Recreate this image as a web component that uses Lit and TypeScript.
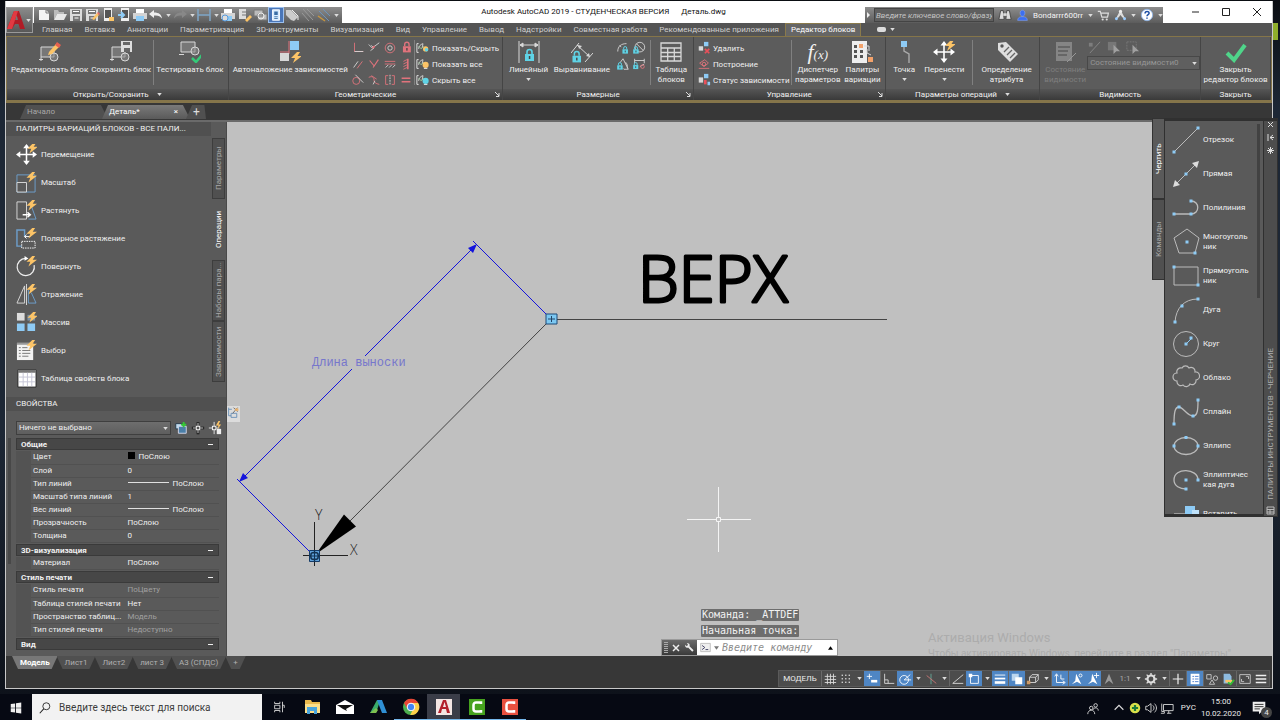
import { LitElement, html, svg, css, TemplateResult } from "lit";
import { customElement, property } from "lit/decorators.js";
import { classMap } from "lit/directives/class-map.js";

const G = "#d8d8d8";
const B = "#8ecbf5";
const R = "#e0737c";
const Y = "#fcc467";
const C = "#5fd3e6";

const bolt = (x: number, y: number) => svg`<path transform="translate(${x} ${y})" fill=${Y} d="M6 0L0 6h4l-2 5 9-7H6.500L9 0z"/>`;
const dots = (pts: number[][]) => pts.map(([x, y]) => svg`<rect x=${x - 1.5} y=${y - 1.5} width="3" height="3" fill=${B}/>`);
const lock = (x: number, y: number, s: number, color = C) => svg`<g transform="translate(${x} ${y}) scale(${s})"><path d="M2.500 5V3a2.500 2.500 0 0 1 5 0v2" fill="none" stroke=${color} stroke-width="1.600"/><rect y="5" x="0.500" width="9" height="7" fill=${color}/><rect x="4.300" y="7" width="1.500" height="3" fill="#444"/></g>`;
const move4 = svg`<path d="M11 3v16M3 11h16" stroke="#fff" stroke-width="1.600" fill="none"/><path d="M11 0l3.500 4.500h-7zM11 22l3.500-4.500h-7zM0 11l4.500-3.500v7zM22 11l-4.500-3.500v7z" fill="#fff"/>`;
const block = svg`<path d="M2 6h13v10H2z" fill="#777" stroke=${G}/><circle cx="15" cy="16" r="4" fill="#888" fill-opacity=".6" stroke=${G}/><path d="M0 18.500h4M2 16v4" stroke=${G}/>`;
const floppy = svg`<path d="M2 2h12v12H2z" fill="#dcdcdc"/><path d="M4 3h8v4H4zM5 9h7v5H5z" fill="#777"/><path d="M5 4.500h6M6.500 11h4" stroke="#fff"/>`;
const printer = svg`<path d="M4 2h8v4H4z" fill="#fff"/><path d="M1 6h14v6H1z" fill="#d4d4d4"/><path d="M4 9h8v5H4z" fill=${B}/>`;
const sheetEye = svg`<path d="M3 9c0-3 2-5 5-6l-1 5" fill="none" stroke=${G}/><path d="M1 3v10M1 3h2M1 13h2" stroke="#eee" fill="none"/><path d="M3 6l3 3 3-3" stroke="#9c9" fill="none"/>`;
const person = svg`<path d="M8 1.500c2 0 3 1.500 3 3.500s-1 4-3 4-3-2-3-4 1-3.500 3-3.500zM2 14c0-3 2-4 4-4.500h4c2 .5 4 1.500 4 4.500z" fill="#3d6ff0" stroke="#9db9ff" stroke-width=".5"/>`;

/** Icon artwork: [viewBox side, shapes]. */
const ICONS: Record<string, [number, unknown]> = {
  new: [16, svg`<path d="M3 3h7l3 3v7H3z" fill="#f4f4f4"/><path d="M10 3v3h3" fill="none" stroke="#777"/>`],
  open: [16, svg`<path d="M2 3h4l1 2h5v2H5l-3 6z" fill="#bbb"/><path d="M5 7h10l-3 6H2z" fill="#e8e8e8"/>`],
  save: [16, floppy],
  saveas: [16, svg`${floppy}<path d="M8 12l5-6 2 2-5 5z" fill=${Y}/><path d="M13 6l2 2 1-1-2-2z" fill="#e66"/>`],
  webopen: [16, svg`<path d="M4 1h8v13H4z" fill="#eee"/><path d="M5 3h6v8H5z" fill="#555"/><path d="M9 10h5v4H9z" fill=${Y}/>`],
  websave: [16, svg`<path d="M5 1h8v13H5z" fill="#eee"/><path d="M6 3h6v8H6z" fill="#555"/><path d="M2 8h6M5 5l3 3-3 3" stroke=${B} stroke-width="2" fill="none"/>`],
  print: [16, printer],
  undo: [16, svg`<path d="M6 3L1 7l5 4V8.500c4-.5 6 .5 8 3-.5-4-3-6-8-6z" fill="#eee"/>`],
  redo: [16, svg`<path d="M10 3l5 4-5 4V8.500c-4-.5-6 .5-8 3 .5-4 3-6 8-6z" fill="#888"/>`],
  dim: [16, svg`<path d="M2 2v12M14 2v12M2 8h12" stroke="#7fa6c8" stroke-width="1.500" fill="none"/>`],
  plot: [16, svg`${printer}<circle cx="5" cy="11" r="3" fill="#ddd" stroke="#59d"/>`],
  publish: [16, svg`<path d="M3 2h7v10H3z" fill="#ddd"/><path d="M6 5h8M6 8h8" stroke="#777"/><path d="M9 13l5-5 2 2-5 5z" fill=${Y}/>`],
  batch: [16, svg`<path d="M2 3h9v6H2zM6 7h9v6H6z" fill="#bbb" stroke="#777"/><circle cx="9" cy="9" r="3" fill="none" stroke="#eee"/>`],
  sheet: [16, svg`<path d="M4 2h8v12H4z" fill="#d8ecff" stroke="#fff"/><path d="M6 4h4v4H6z" fill="#3b6ea5"/><path d="M6 10h4M6 12h4" stroke="#3b6ea5"/>`],
  tag: [16, svg`<path d="M2 3h5l7 7-4 4-3-1-5-5z" fill="#ccc"/><path d="M8 3l6 6v4" stroke="#eee" fill="none"/>`],
  lines: [16, svg`<path d="M3 2l10 11M2 6l7 8M7 2l7 7" stroke="#999"/>`],
  lines2: [16, svg`<path d="M3 4l10 10M7 2l7 7" stroke="#6d94bb"/><path d="M2 9l7 5" stroke="#c8973f" stroke-width="1.500"/>`],
  bino: [16, svg`<path d="M3 3h3l1 10H1zM10 3h3l2 10H9z" fill="#ddd" stroke="#444"/><path d="M6 6h4v3H6z" fill="#ddd"/>`],
  person: [16, person],
  cart: [16, svg`<path d="M1 3h3l2 7h7l1-5H5" fill="none" stroke="#ddd" stroke-width="1.500"/><circle cx="7" cy="13" r="1.300" fill="#ddd"/><circle cx="12" cy="13" r="1.300" fill="#ddd"/>`],
  a360: [16, svg`<path d="M8 3l-5 9M8 3l5 9M5 10l3-4 3 4" stroke="#ddd" stroke-width="1.600" fill="none"/><circle cx="8" cy="3" r="2" fill="#eee"/><circle cx="3" cy="12" r="1.800" fill="#9cf"/><circle cx="13" cy="12" r="1.800" fill="#9cf"/>`],
  help: [16, svg`<circle cx="8" cy="8" r="6.500" fill="#fff" stroke="#8fb3e6"/><path d="M5.800 6.200c0-3 4.600-3 4.600-.2C10.400 7.500 8 7.600 8 9.500M8 10.800v1.600" stroke="#1d4fa5" stroke-width="1.700" fill="none"/>`],
  editBlock: [22, svg`${block}<path d="M10 11l7-8 3 3-7 7-4 1z" fill=${Y}/><path d="M16 4l2-3 4 3-2 3z" fill="#e6604f"/>`],
  saveBlock: [22, svg`${block}<path d="M11 0h11v11H11z" fill="#ddd"/><path d="M13 1h7v3h-7zM14 7h6v4h-6z" fill="#666"/>`],
  testBlock: [22, svg`<path d="M2 1h14v10H2z" fill="#777" stroke=${G}/><circle cx="16" cy="10" r="4" fill="#888" fill-opacity=".6" stroke=${G}/><path d="M0 13.500h5" stroke=${G}/><path d="M13 17l4 4 6-7" stroke="#35c978" stroke-width="2.500" fill="none"/>`],
  auto: [22, svg`<path d="M11 0h9v9h-9z" fill=${B}/><path d="M10 0v13M1 11h9" stroke=${R}/><path d="M1 12h9v8H1z" fill=${G}/>${bolt(12, 11)}`],
  g0: [16, svg`<path d="M4 2v10h10" fill="none" stroke=${R}/><path d="M4 12h10" stroke=${G}/>`],
  g1: [16, svg`<path d="M2 4l4 4M6 8l8-6M5 5l3 3-4 3" stroke=${G} fill="none"/><path d="M6 8l3-2" stroke=${R} stroke-width="2"/>`],
  g2: [16, svg`<circle cx="8" cy="8" r="5.500" fill="none" stroke=${R}/><circle cx="8" cy="8" r="2.500" fill="none" stroke=${G}/>`],
  g3: [16, lock(4, 1, 1, R)],
  g4: [16, svg`<path d="M3 12l5-7" stroke=${G}/><path d="M7 13l6-8" stroke=${R}/>`],
  g5: [16, svg`<path d="M3 4l5 6M7 12l6-9" stroke=${R} fill="none" stroke-width="1.300"/>`],
  g6: [16, svg`<path d="M2 5h12M2 8h12" stroke=${R}/><path d="M3 12l3-3M7 12l3-3M11 12l3-3" stroke=${G}/>`],
  g7: [16, svg`<path d="M10 2v12" stroke=${R} stroke-width="2"/><path d="M5 5l4-2M5 8l4-2M5 11l4-2M5 14l4-2" stroke=${R}/>`],
  g8: [16, svg`<circle cx="6" cy="9" r="4" fill="none" stroke=${R}/><path d="M5 2l9 9" stroke=${G}/>`],
  g9: [16, svg`<path d="M2 5c4-2 6 0 6 3s2 4 6 5M5 3l6 4" stroke=${R} fill="none"/><path d="M9 9l-2 4" stroke=${G}/>`],
  g10: [16, svg`<path d="M6 3H3v10h3M10 3h3v10h-3" stroke=${R} fill="none"/><path d="M8 2v12" stroke=${G} stroke-dasharray="2 1"/>`],
  g11: [16, svg`<path d="M3 6h10M3 10h10" stroke=${R} stroke-width="1.700"/>`],
  show: [16, svg`${sheetEye}<circle cx="11" cy="9" r="3" fill=${Y}/><circle cx="12" cy="10" r="2" fill=${C}/>`],
  showAll: [16, svg`${sheetEye}<circle cx="11" cy="9" r="3.500" fill=${Y}/><path d="M9 13h4" stroke="#fff"/>`],
  hideAll: [16, svg`${sheetEye}<circle cx="11" cy="9" r="3.500" fill=${C}/><path d="M9 13h4" stroke="#fff"/>`],
  linear: [22, svg`<path d="M1 0v22M21 0v22M2 4h18M2 4l3-2v4zM20 4l-3-2v4z" stroke=${G} fill=${G}/>${lock(6.500, 8, 1)}`],
  align: [22, svg`<path d="M0 12L8 2M14 21l8-9M6 4l13 12" stroke=${G}/><path d="M7 4l4 1-3 3zM19 16l-4-1 3-3z" fill=${G}/>${lock(1, 10, 0.950)}`],
  d0: [16, svg`<path d="M2 12C2 6 6 3 12 3M4 5l2 2" stroke=${G} fill="none"/>${lock(7, 6, 0.700)}`],
  d1: [16, svg`<circle cx="9" cy="7" r="5.500" fill="none" stroke=${G}/><path d="M5 3l8 8" stroke=${G}/>${lock(1, 6, 0.700)}`],
  d2: [16, svg`<path d="M14 14H9l-1-1M14 14L8 2 5 6M11 6c2 2 2 4 2 7" fill="none" stroke=${G}/>${lock(1, 6, 0.700)}`],
  d3: [16, svg`<path d="M3 2v5M14 2v5M3 4h11M9 11l5-3" stroke=${G}/>${lock(1, 6, 0.650)}<circle cx="12" cy="11" r="2" fill="none" stroke=${R}/>`],
  btable: [22, svg`<path d="M1 2h20v18H1zM1 7h20M1 11.500h20M1 15.500h20M7.700 7v13M14.300 7v13" fill="none" stroke=${G} stroke-width="1.300"/>`],
  del: [16, svg`<path d="M8 1h5v5H8z" fill=${B}/><path d="M2 6h5v5H2z" fill=${G}/><path d="M9 9l5 5M14 9l-5 5" stroke="#e8505a" stroke-width="2"/>`],
  build: [16, svg`<path d="M3 7l6-4 4 4-5 4zM2 13h12" stroke=${R} fill="none"/><circle cx="8" cy="8" r="2" fill="none" stroke=${R}/>`],
  status: [16, svg`<path d="M8 1h5v5H8z" fill=${B}/><path d="M2 5h5v6H2z" fill=${G}/><path d="M8 8h3v5H8z" fill="#e8505a"/><path d="M12 10h3v4h-3z" fill=${B}/>`],
  pal: [22, svg`<path d="M1 0h15v22H1z" fill="#eee"/><path d="M3 4h3v3H3zM3 9h3v3H3zM3 14h3v3H3zM9 9h3v3H9zM9 14h3v3H9z" fill="#555"/><path d="M8 3h4v4H8zM17 16h5v5h-5z" fill="#f3a26b"/><path d="M13 5h5v5M16 8v4l4 2" stroke=${G} fill="none"/>`],
  point: [22, svg`<path d="M11 4v6l5 3v9" stroke="#aaa" fill="none" stroke-width="1.400"/><rect x="8" y="0" width="6" height="6" fill=${B}/>`],
  moveB: [22, svg`${move4}${bolt(12, -1)}`],
  attr: [22, svg`<path d="M2 2l8-1 12 12-8 8L2 9z" fill="#dedede"/><circle cx="6" cy="5" r="1.700" fill="#555"/><path d="M8 11l5-5M11 14l5-5M14 17l5-5" stroke="#666" stroke-width="1.300"/>`],
  vis: [22, svg`<path d="M2 1h16v19H2z" fill="#858585"/><path d="M4 6h12M4 10h10M4 14h9" stroke="#5c5c5c" stroke-width="1.600"/><path d="M13 21l9-9" stroke="#999"/>`],
  v0: [16, svg`<path d="M3 14L14 2" stroke="#888"/><path d="M2 3h4v4H2z" fill="#7d7d7d"/>`],
  v1: [16, svg`<path d="M2 2h9v9H2z" fill="#777"/><path d="M8 5v10l3-3 4 0z" fill="#a0a0a0"/>`],
  v2: [16, svg`<path d="M2 2h10v9H2z" fill="none" stroke="#777" stroke-dasharray="2 1"/><path d="M8 5v10l3-3 4 0z" fill="#a0a0a0"/>`],
  check: [22, svg`<path d="M2 12l7 7L20 4" fill="none" stroke="#4fd58a" stroke-width="4"/>`],
  scale: [22, svg`<path d="M1 3h19v18H1z" fill="none" stroke="#6d9ecb"/><path d="M1 11h10v10H1z" fill="#5a5a5a" stroke=${G}/>${bolt(11, 0)}`],
  stretch: [22, svg`<path d="M1 2h10v18H1z" fill="none" stroke=${G}/><path d="M16 6l5 14h-8" fill="none" stroke="#6d9ecb"/><path d="M7 15.500h8M12 13l3 2.500-3 2.500" fill="none" stroke="#fff" stroke-width="1.500"/>${bolt(11, 0)}`],
  polar: [22, svg`<path d="M6 19H1V2h8v7" fill="none" stroke="#6d9ecb" stroke-width="1.500"/><path d="M6 14h14v7H6z" fill="none" stroke="#fff" stroke-dasharray="1.500 1"/><path d="M9 9h6M11 7L9 9l2 2" stroke="#fff" fill="none"/>${bolt(11, 0)}`],
  rotate: [22, svg`<path d="M10 2.500a9 9 0 1 0 9 7" fill="none" stroke="#eee" stroke-width="1.300"/><path d="M9 0l4 2.500L9 5z" fill="#fff"/>${bolt(11, 0)}`],
  mirror: [22, svg`<path d="M9 2v18H1z" fill="none" stroke=${G}/><path d="M13 6v14h8l-5-11" fill="none" stroke="#6d9ecb"/><path d="M11 0v22" stroke=${G}/>${bolt(11, 0)}`],
  array: [22, svg`<path d="M1 1h8v8H1z" fill="#ddd"/><path d="M12 3h8v6h-8z" fill="#7d93a4"/><path d="M1 12h8v8H1zM12 12h8v8h-8z" fill=${B}/>${bolt(12, 0)}`],
  choose: [22, svg`<path d="M1 3h17v18H1z" fill="#f2f2f2"/><path d="M1 3h17v2H1z" fill="#999"/><path d="M3 8h2M6.500 8H12M3 11h2M6.500 11H15M3 14h2M6.500 14H15M3 17h2M6.500 17H13" stroke="#777"/>${bolt(11, 0)}`],
  props: [22, svg`<path d="M2 2h19v18H2z" fill="#fff" stroke="#222"/><path d="M2 2h19v3H2z" fill="#777"/><path d="M3 9.500h17M3 14.500h17M7.500 5v14M12 5v14M16.500 5v14" stroke="#c6c6d6"/>`],
  q0: [16, svg`<path d="M2 3h8v6H2z" fill="#bcd9ee" stroke="#234"/><path d="M5 6h9v8H5z" fill="#4b7fa8" stroke="#dde"/><path d="M11 1v6M8 4h6" stroke="#3c3" stroke-width="2"/>`],
  q1: [16, svg`<path d="M8 1v14M1 8h14" stroke="#111" stroke-width="3"/><path d="M8 2v12M2 8h12" stroke="#eee"/><rect x="6" y="6" width="4" height="4" fill="#555" stroke="#fff"/>`],
  q2: [16, svg`<path d="M7 1v14M1 8h12" stroke="#eee"/><rect x="5" y="6" width="4" height="4" fill="#555" stroke="#fff"/><path d="M12 0l-3 5h3l-1 4 4-5h-3l2-4z" fill=${Y}/><path d="M10 9h5v6h-5z" fill="#eee"/>`],
  tLine: [28, svg`<path d="M2 26L26 2" stroke="#bbb" fill="none"/>${dots([[2, 26], [26, 2]])}`],
  tRay: [28, svg`<path d="M3 25L25 3" stroke="#bbb"/><path d="M27 1l-2 7-5-5zM1 27l2-7 5 5z" fill="#ddd"/>${dots([[14, 14]])}`],
  tPoly: [28, svg`<path d="M2 20h17c9 0 9-13 0-13" stroke="#bbb" fill="none" stroke-width="1.300"/>${dots([[2, 20], [19, 20], [19, 7]])}`],
  tPent: [28, svg`<path d="M15 1l12 9-4 15H7L2 10z" stroke="#bbb" fill="none"/>${dots([[15, 14], [23, 25]])}`],
  tRect: [28, svg`<path d="M2 5h24v18H2z" stroke="#bbb" fill="none"/>${dots([[2, 5], [26, 23]])}`],
  tArc: [28, svg`<path d="M3 26C4 12 12 3 26 3" stroke="#bbb" fill="none"/>${dots([[3, 26], [10, 10], [26, 3]])}`],
  tCircle: [28, svg`<circle cx="14" cy="14" r="12.500" stroke="#bbb" fill="none"/><path d="M14 14l5-5" stroke=${B}/>${dots([[14, 14], [19, 8]])}`],
  tCloud: [28, svg`<path d="M5 9a4 4 0 0 1 5-5 4 4 0 0 1 7 0 4 4 0 0 1 6 4 4 4 0 0 1 1 8 4 4 0 0 1-6 4 4 4 0 0 1-7 1 4 4 0 0 1-6-4 4 4 0 0 1 0-8z" stroke="#bbb" fill="none" stroke-width="1.200"/>`],
  tSpline: [28, svg`<path d="M2 26C2 14 3 9 7 9s8 9 14 9c5 0 5-8 5-16" stroke="#bbb" fill="none" stroke-width="1.300"/>${dots([[2, 26], [7, 9], [21, 18], [26, 2]])}`],
  tEll: [28, svg`<ellipse cx="14" cy="14" rx="12" ry="8.500" stroke="#bbb" fill="none" stroke-width="1.300"/>${dots([[14, 5.500], [2, 14], [26, 14]])}`],
  tEarc: [28, svg`<path d="M26 14C26 2 2 1 2 14c0 6 6 9 12 9" stroke="#bbb" fill="none" stroke-width="1.300"/>${dots([[14, 14], [26, 14], [14, 23]])}`],
  tIns: [28, svg`<path d="M2 14h24" stroke="#ddd"/><path d="M13 6h10v8H13z" fill=${B}/><path d="M20 10h7v8h-7z" fill="#bfe2fa"/>`],
  sGrid: [16, svg`<path d="M5 2v12M8.500 2v12M12 2v12M2 5h13M2 8.500h13M2 12h13" stroke="#ddd"/>`],
  sSnap: [16, svg`<g fill="#ddd">${[3, 7, 11].map((x) => [3, 7, 11].map((y) => svg`<rect x=${x} y=${y} width="1.500" height="1.500"/>`))}</g>`],
  sDyn: [16, svg`<path d="M2 5h6M5 2v6" stroke="#fff"/><path d="M7 9h7v3H7z" fill="#fff"/>`],
  sOrtho: [16, svg`<path d="M3 2v11h11M3 9h4v4" stroke="#ddd" fill="none"/>`],
  sPolar: [16, svg`<circle cx="7" cy="9" r="5" stroke="#fff" fill="none"/><path d="M7 9l7-6M7 9h8" stroke="#fff"/>`],
  sIso: [16, svg`<path d="M8 2v12" stroke="#6a9"/><path d="M3 4l11 9" stroke="#c77"/>`],
  sAngle: [16, svg`<path d="M14 3L2 13h12" stroke="#ddd" fill="none"/>`],
  sOsnap: [16, svg`<path d="M4 4h9v9H4z" fill="none" stroke="#fff"/><path d="M2 2h4v4H2z" fill="#fff"/>`],
  sLwt: [16, svg`<path d="M2 3.500h12" stroke="#fff"/><path d="M2 7.500h12" stroke="#fff" stroke-width="2"/><path d="M2 12h12" stroke="#fff" stroke-width="3"/>`],
  sTrans: [16, svg`<path d="M2 2h8v8H2z" fill="#bcd6ee"/><path d="M6 6h8v8H6z" fill="#fff"/>`],
  sCube: [16, svg`<path d="M4 6l3-3h7v6l-3 3H4zM4 6h7v6M11 6l3-3" stroke="#ddd" fill="none"/><path d="M1 10h4v4H1z" fill="#c96"/>`],
  sUcs: [16, svg`<path d="M4 3v9h9M2 5l2-3 2 3M11 10l3 2-3 2M9 3v5h4" stroke="#fff" fill="none"/>`],
  sAnno: [16, svg`<path d="M7 2l6 12-5-3-6 3 4-4z" fill="#fff"/><circle cx="12" cy="4" r="1.700" fill="none" stroke="#fff"/>`],
  sAnno2: [16, svg`<path d="M7 2l6 12-5-3-6 3 4-4z" fill="#fff"/><path d="M12 1v6M9 4h6" stroke="#fff"/>`],
  sAnno3: [16, svg`<path d="M8 2l5 12-5-4-5 4z" fill="#999"/>`],
  sGear: [16, svg`<circle cx="8" cy="8" r="4" fill="none" stroke="#ddd" stroke-width="2.500"/><path d="M8 1v3M8 12v3M1 8h3M12 8h3M3 3l2 2M11 11l2 2M13 3l-2 2M3 13l2-2" stroke="#ddd" stroke-width="1.600"/>`],
  sPlus: [16, svg`<path d="M8 2v12M2 8h12" stroke="#eee" stroke-width="1.400"/>`],
  sQp: [16, svg`<path d="M3 2h10v12H3z" fill="#fff"/><path d="M5 5h2M8 5h4M5 8h2M8 8h4M5 11h2M8 11h4" stroke="#47c"/>`],
  sIsol: [16, svg`<path d="M2 3h5v5H2zM5 14l3-5 3 5z" fill="none" stroke="#ccc"/><circle cx="12" cy="7" r="2.500" fill="none" stroke="#ccc"/>`],
  sHw: [16, svg`<path d="M3 2h7l2 3v8H3z" fill="#8dbbe0"/><path d="M5 9h8v3H5z" fill=${Y}/><path d="M8 12l3 2 4-5" stroke="#3b3" stroke-width="2" fill="none"/>`],
  sClean: [16, svg`<path d="M2 3h12v10H2z" fill="none" stroke="#ccc"/><path d="M9 5h3v3M7 11H4V8" stroke="#ccc" fill="none"/>`],
  sMenu: [16, svg`<path d="M2 4h12M2 8h12M2 12h12" stroke="#eee" stroke-width="1.500"/>`],
  win: [16, svg`<path d="M2 3.500l5-.7V7.600H2zM8 2.700l6-.9v5.800H8zM2 8.400h5v4.800l-5-.7zM8 8.400h6v5.800l-6-.9z" fill="#eee"/>`],
  search: [16, svg`<circle cx="9.500" cy="6" r="4" fill="none" stroke="#222"/><path d="M6.500 9L2 14" stroke="#222" stroke-width="1.200"/>`],
  task: [16, svg`<path d="M3 2v2h6V2M3 14v-2h6v2M3 6h6v4H3zM12 2v12M12 6h2v3" stroke="#ddd" fill="none"/>`],
  folder: [20, svg`<path d="M3 3h6l1 2h8v11H3z" fill="#e9b94d"/><path d="M3 7h15v9H3z" fill="#fbdf8a"/><path d="M5 10h10v7h-3v-3H8v3H5z" fill="#48a4dc"/>`],
  mail: [20, svg`<path d="M1 8l9-5 9 5v9H1z" fill="#fff"/><path d="M2 8h16l-7 4 1 2-4-2z" fill="#111"/>`],
  adsk: [20, svg`<path d="M2 16L9 3l3 1-4 12z" fill="#3aaa6b"/><path d="M9 3h5l5 13h-5z" fill="#2f8fd4"/><path d="M2 16l6-5 2 2-2 3z" fill="#7ec04f"/>`],
  chrome: [20, svg`<circle cx="10" cy="10" r="8" fill="#4caf50"/><path d="M3 6a8 8 0 0 1 14.200 0H10l-3.500 6z" fill="#e84435"/><path d="M17.200 6a8 8 0 0 1-8 12l4-8-3-4z" fill="#fcd04b"/><circle cx="10" cy="10" r="3.800" fill="#4285f4" stroke="#fff"/>`],
  acad: [20, svg`<path d="M2 2h16v16H2z" fill="#f3e6e4"/><path d="M4 16L9 3h3l4 13h-3l-1-4H8l-1 4zM9 10h3l-1.500-5z" fill="#b3202c"/>`],
  camG: [20, svg`<path d="M2 2h16v16H2z" fill="#46a21e"/><path d="M14 7V5.500H9A2.500 2.500 0 0 0 6.500 8v4A2.500 2.500 0 0 0 9 14.500h5V13" fill="none" stroke="#fff" stroke-width="2.500"/>`],
  camR: [20, svg`<path d="M2 2h16v16H2z" fill="#e8503f"/><path d="M14 7V5.500H9A2.500 2.500 0 0 0 6.500 8v4A2.500 2.500 0 0 0 9 14.500h5V13" fill="none" stroke="#fff" stroke-width="2.500"/>`],
  ppl: [16, svg`<circle cx="6" cy="8" r="2" fill="none" stroke="#ddd"/><path d="M2 15c0-6 8-6 8 0M8 10c1-3 6-3 6 1" fill="none" stroke="#ddd"/><circle cx="11" cy="5" r="2" fill="none" stroke="#ddd"/>`],
  chev: [16, svg`<path d="M3 10l5-5 5 5" fill="none" stroke="#ddd" stroke-width="1.300"/>`],
  yel: [16, svg`<circle cx="8" cy="8" r="6" fill="#d8e04a"/><path d="M8 4.500v7M4.500 8h7" stroke="#1c7a3a" stroke-width="2.500"/>`],
  vol: [16, svg`<path d="M2 6h2l4-3v10l-4-3H2z" fill="none" stroke="#ddd"/><path d="M10 5c2 2 2 4 0 6M12 3c3 3 3 7 0 10" fill="none" stroke="#ddd"/>`],
  net: [16, svg`<path d="M4 4h11v7H4zM8 14h5M10 11v3M2 3v9h3v2H1" fill="none" stroke="#ddd"/>`],
  note: [20, svg`<path d="M3 3h14v11h-4l-3 3v-3H3z" fill="#eee"/><path d="M5 6h10M5 8.500h10M5 11h6" stroke="#222"/>`],
  wrench: [16, svg`<path d="M2 3l3 3M4 2c3-1 5 1 4 4l6 6-2 2-6-6C3 9 1 7 2 4l2 2 2-2z" fill="#eee"/>`],
  prompt: [16, svg`<path d="M1 2h14v12H1z" fill="#eee" stroke="#aaa"/><path d="M3 5l4 3-4 3M8 11h4" stroke="#446" stroke-width="1.400" fill="none"/>`],
  floatp: [16, svg`<path d="M2 2v10h3M5 9h7v5H5zM2 4h4" fill="none" stroke="#5c87b3"/><path d="M7 9l6-7M8 2l5 5" stroke="#555"/><path d="M10 3h4v3h-4z" fill="#e9b06a"/>`],
};

const icon = (name: string, size = 16): TemplateResult => {
  const [box, art] = ICONS[name];
  return html`<svg class="ic" width=${size} height=${size} viewBox="0 0 ${box} ${box}" aria-hidden="true">${art}</svg>`;
};
const caret = (): TemplateResult => html`<svg class="ic caret" width="5" height="3" viewBox="0 0 6 4" aria-hidden="true"><path d="M0 0h6L3 4z" fill="#ddd"/></svg>`;

const base = css`
  * { box-sizing: border-box; }
  button { font: inherit; color: inherit; background: none; border: 0; padding: 0; margin: 0; white-space: nowrap; }
  input, select { font: inherit; margin: 0; border-radius: 0; outline: 0; }
  .ic { display: block; flex: none; }
`;

@customElement("cad-titlebar")
export class CadTitlebar extends LitElement {
  static styles = [base, css`
    :host { display: flex; height: 22px; background: #fff; color: #111; }
    .qat { display: flex; align-items: center; margin: 6px 0 0 28px; padding: 0 2px; height: 16px; background: linear-gradient(#8d8d8d, #5c5c5c); }
    .qat button { width: 16px; height: 16px; }
    .qat .drop { width: 8px; display: flex; justify-content: center; align-items: center; }
    .qat .on { background: #4a76b8; border: 1px solid #9cc0ee; }
    .qat .on .ic { width: 14px; height: 14px; }
    .name { flex: 1; text-align: center; line-height: 22px; white-space: pre; }
    .info { display: flex; align-items: center; margin-top: 6px; height: 16px; width: 298px; color: #f4f4f4; background: linear-gradient(#8d8d8d, #5c5c5c); gap: 4px; }
    .info input { width: 120px; flex: none; height: 14px; background: #5f5f5f; border: 1px solid #444; color: #eee; padding: 0 1px; font-style: italic; }
    .info input::placeholder { color: #c4c4c4; opacity: 1; }
    .user { flex: 1; min-width: 0; text-align: left; }
    .ctl { display: flex; padding-left: 16px; }
    .ctl button { width: 31px; display: grid; place-items: center; }
  `];
  render() {
    const q = ["new", "open", "save", "saveas", "webopen", "websave", "print", "undo", "", "redo", "", "dim", "", "plot", "publish", "batch", "sheet", "tag", "lines", "lines2", ""];
    const ctl = ["M2 5h7", "M1.500 1.500h7v7h-7z", "M1 1l8 8M9 1l-8 8"];
    const names = ["Свернуть", "Развернуть", "Закрыть"];
    return html`
      <div class="qat">${q.map((n) => html`<button aria-label=${n || "меню"} class=${classMap({ drop: !n, on: n === "sheet" })}>${n ? icon(n) : caret()}</button>`)}</div>
      <div class="name">Autodesk AutoCAD 2019 - СТУДЕНЧЕСКАЯ ВЕРСИЯ      Деталь.dwg</div>
      <div class="info">
        <svg class="ic" width="5" height="6" viewBox="0 0 5 6"><path d="M2 0l3 3-3 3z" fill="#eee"/></svg>
        <input aria-label="Поиск" placeholder="Введите ключевое слово/фразу" />
        ${icon("bino", 14)}${icon("person", 13)}
        <button class="user">Bondarrr600rr</button>${caret()}
        ${icon("cart", 13)}${icon("a360", 13)}${caret()}${icon("help", 14)}${caret()}
      </div>
      <div class="ctl">${ctl.map((d, i) => html`<button aria-label=${names[i]}><svg class="ic" width="10" height="10" viewBox="0 0 10 10"><path d=${d} fill="none" stroke="#222"/></svg></button>`)}</div>`;
  }
}

@customElement("cad-ribbon")
export class CadRibbon extends LitElement {
  static styles = [base, css`
    :host { display: block; color: #f0f0f0; }
    .tabs { display: flex; align-items: stretch; height: 13px; padding-left: 36px; gap: 12px; background: #545454; color: #cfcfcf; line-height: 13px; }
    .tabs .on { background: #666; color: #fff; border: 1px solid #8a7a4c; border-bottom: 0; padding: 0 5px; margin: 0 -6px; line-height: 12px; }
    .more { display: flex; align-items: center; gap: 4px; margin-left: 10px; }
    .more i { display: block; width: 9px; height: 5px; border-radius: 2px; background: #ddd; }
    .panels { display: grid; grid-template-columns: 222fr 275fr 191fr 192fr 155fr 161fr 70fr; height: 67px; background: #5c5c5c; border: 1px solid #857549; border-bottom: 3px solid #85754a; }
    .panel { display: grid; grid-template-rows: 52px 11px; border-right: 1px solid #454545; min-width: 0; }
    .body { display: flex; justify-content: space-between; padding: 3px 3px 0; min-width: 0; }
    .foot { display: flex; align-items: center; justify-content: center; gap: 8px; position: relative; background: linear-gradient(#555, #3a3a3a); line-height: 11px; }
    .launch { position: absolute; right: 2px; top: 3px; }
    .big { display: flex; flex-direction: column; align-items: center; line-height: 10px; height: 48px; gap: 2px; padding: 1px 1px 0; text-align: center; }
    .big .caret { margin-top: 1px; }
    .lbl { white-space: pre; }
    .dim { color: #7f7f7f; }
    .sep { width: 1px; background: #808080; margin-bottom: 4px; }
    .grid4 { display: grid; grid-template-columns: repeat(4, 16px); grid-auto-rows: 16px; }
    .grid2 { display: grid; grid-template-columns: repeat(2, 16px); grid-auto-rows: 16px; }
    .grid4 button, .grid2 button { display: grid; place-items: center; }
    .list { display: flex; flex-direction: column; }
    .list button { display: flex; align-items: center; gap: 2px; height: 16px; }
    .vis { display: flex; flex-direction: column; gap: 1px; }
    .row { display: flex; gap: 4px; }
    .pick { display: flex; align-items: center; position: relative; }
    .pick select { appearance: none; width: 113px; height: 14px; background: #5f5f5f; border: 1px solid #484848; color: #969696; padding: 0 2px; line-height: 12px; opacity: 1; }
    .pick .caret { position: absolute; right: 3px; }
    .fx { font: italic 22px/22px "Liberation Serif", serif; height: 22px; }
    .fx small { font-size: 13px; line-height: 1; }
    .center { justify-content: center; }
    .around { justify-content: space-around; }
  `];
  big(name: string, label: string, opts: { drop?: boolean; dim?: boolean } = {}) {
    return html`<button class=${classMap({ big: true, dim: !!opts.dim })} ?disabled=${!!opts.dim}>
      ${name === "fx" ? html`<span class="fx">f<small>(x)</small></span>` : icon(name, 22)}
      <span class="lbl">${label}</span>${opts.drop ? caret() : ""}</button>`;
  }
  small(names: string[], cls: string) {
    return html`<div class=${cls}>${names.map((n) => html`<button aria-label=${n}>${icon(n, 14)}</button>`)}</div>`;
  }
  list(rows: string[][]) {
    return html`<div class="list">${rows.map(([n, t]) => html`<button>${icon(n, 14)}${t}</button>`)}</div>`;
  }
  panel(title: string, body: unknown, opts: { drop?: boolean; launch?: boolean; cls?: string } = {}) {
    return html`<section class="panel"><div class="body ${opts.cls ?? ""}">${body}</div>
      <div class="foot"><span>${title}</span>${opts.drop ? caret() : ""}${opts.launch ? html`<svg class="ic launch" width="5" height="5" viewBox="0 0 5 5"><path d="M0 0l4 4M4 1v3.500H1" stroke="#ddd" fill="none"/></svg>` : ""}</div></section>`;
  }
  render() {
    const tabs = ["Главная", "Вставка", "Аннотации", "Параметризация", "3D-инструменты", "Визуализация", "Вид", "Управление", "Вывод", "Надстройки", "Совместная работа", "Рекомендованные приложения", "Редактор блоков"];
    const sep = html`<i class="sep"></i>`;
    return html`
      <nav class="tabs">${tabs.map((t, i) => html`<button class=${classMap({ on: i === 12 })}>${t}</button>`)}<span class="more"><i></i>${caret()}</span></nav>
      <div class="panels">
        ${this.panel("Открыть/Сохранить", html`${this.big("editBlock", "Редактировать блок")}${this.big("saveBlock", "Сохранить блок")}${sep}${this.big("testBlock", "Тестировать блок")}`, { drop: true })}
        ${this.panel("Геометрические", html`${this.big("auto", "Автоналожение зависимостей")}${this.small([0, 1, 2, 3, 4, 5, 6, 7, 8, 9, 10, 11].map((n) => "g" + n), "grid4")}${sep}${this.list([["show", "Показать/Скрыть"], ["showAll", "Показать все"], ["hideAll", "Скрыть все"]])}`, { launch: true })}
        ${this.panel("Размерные", html`${this.big("linear", "Линейный", { drop: true })}${this.big("align", "Выравнивание")}${this.small(["d0", "d1", "d2", "d3"], "grid2")}${sep}${this.big("btable", "Таблица\nблоков")}`, { launch: true, cls: "around" })}
        ${this.panel("Управление", html`${this.list([["del", "Удалить"], ["build", "Построение"], ["status", "Статус зависимости"]])}${sep}${this.big("fx", "Диспетчер\nпараметров")}${this.big("pal", "Палитры\nвариации")}`, { launch: true })}
        ${this.panel("Параметры операций", html`${this.big("point", "Точка", { drop: true })}${this.big("moveB", "Перенести", { drop: true })}${sep}${this.big("attr", "Определение\nатрибута")}`, { drop: true, cls: "around" })}
        ${this.panel("Видимость", html`${this.big("vis", "Состояние\nвидимости", { dim: true })}
          <div class="vis"><div class="row">${["v0", "v1", "v2"].map((n) => icon(n, 15))}</div>
          <div class="pick"><select disabled aria-label="Состояние видимости"><option>Состояние видимости0</option></select>${caret()}</div></div>`)}
        ${this.panel("Закрыть", this.big("check", "Закрыть\nредактор блоков"), { cls: "center" })}
      </div>`;
  }
}

@customElement("cad-palettes")
export class CadPalettes extends LitElement {
  static styles = [base, css`
    :host { display: flex; flex-direction: column; width: 221px; background: #5a5a5a; color: #f0f0f0; overflow: hidden; border-right: 1px solid #4a4a4a; }
    h2 { margin: 0; height: 14px; padding-left: 10px; font-size: 8px; line-height: 14px; font-weight: 400; background: #505050; }
    .top { display: grid; grid-template-columns: 1fr 14px; column-gap: 1px; }
    .items { display: flex; flex-direction: column; padding-top: 4px; height: 261px; }
    .item { display: flex; align-items: center; gap: 4px; height: 28px; padding-left: 10px; }
    .vt { display: flex; flex-direction: column; padding: 16px 1px 0 0; }
    .vt button { writing-mode: vertical-rl; transform: rotate(180deg); width: 13px; height: 61px; line-height: 12px; color: #a8a8a8; background: #505050; border: 1px solid #3d3d3d; }
    .vt .on { background: none; border-color: transparent; color: #fff; }
    .sel { display: grid; grid-template-columns: 155px repeat(3, 14px); column-gap: 3px; align-items: center; padding: 10px 0 0 10px; }
    .pick { display: grid; align-items: center; position: relative; }
    .pick select { appearance: none; width: 155px; height: 14px; background: linear-gradient(#6e6e6e, #5e5e5e); color: #f0f0f0; border: 1px solid #3f3f3f; padding: 0 2px; line-height: 12px; }
    .pick .caret { position: absolute; right: 3px; }
    .scroll { display: flex; gap: 5px; padding: 3px 7px 0 2px; min-height: 0; flex: 1; overflow: hidden; margin-bottom: 6px; }
    .bar { width: 3px; height: 126px; background: #484848; }
    .groups { flex: 1; display: flex; flex-direction: column; gap: 1px; }
    table { width: 100%; border-collapse: collapse; table-layout: fixed; }
    caption { height: 12px; line-height: 11px; background: #474747; border: 1px solid #3a3a3a; text-align: left; font-weight: 700; padding-left: 4px; margin-bottom: 1px; }
    caption b { float: right; width: 5px; height: 1px; background: #eee; margin: 5px 5px 0 0; }
    th, td { height: 13px; padding: 0 0 0 2px; border-bottom: 1px solid #515151; font-weight: 400; text-align: left; line-height: 12px; white-space: nowrap; overflow: hidden; text-overflow: ellipsis; }
    th { width: 102px; border-left: 15px solid #535353; }
    .muted { color: #a0a0a0; }
    .sw { display: inline-block; width: 7px; height: 7px; background: #000; margin-right: 4px; }
    .ln { display: inline-block; width: 41px; height: 1px; background: #e0e0e0; margin: 0 4px 1px 0; vertical-align: middle; }
  `];
  group(title: string, rows: string[][]) {
    return html`<table><caption>${title}<b></b></caption><tbody>${rows.map(([k, v, f]) => html`<tr><th scope="row">${k}</th><td class=${f === "m" ? "muted" : ""}>${f === "c" ? html`<i class="sw"></i>` : f === "l" ? html`<i class="ln"></i>` : ""}${v}</td></tr>`)}</tbody></table>`;
  }
  render() {
    const items = [["moveB", "Перемещение"], ["scale", "Масштаб"], ["stretch", "Растянуть"], ["polar", "Полярное растяжение"], ["rotate", "Повернуть"], ["mirror", "Отражение"], ["array", "Массив"], ["choose", "Выбор"], ["props", "Таблица свойств блока"]];
    return html`
      <div class="top">
        <div><h2>ПАЛИТРЫ ВАРИАЦИЙ БЛОКОВ - ВСЕ ПАЛИ...</h2>
          <div class="items">${items.map(([n, t]) => html`<button class="item">${icon(n, 21)}${t}</button>`)}</div></div>
        <div class="vt">${["Параметры", "Операции", "Наборы пара...", "Зависимости"].map((t, i) => html`<button class=${i === 1 ? "on" : ""}>${t}</button>`)}</div>
      </div>
      <h2>СВОЙСТВА</h2>
      <div class="sel"><div class="pick"><select aria-label="Выбранные объекты"><option>Ничего не выбрано</option></select>${caret()}</div>${["q0", "q1", "q2"].map((n) => icon(n, 14))}</div>
      <div class="scroll"><div class="bar"></div><div class="groups">
        ${this.group("Общие", [["Цвет", "ПоСлою", "c"], ["Слой", "0"], ["Тип линий", "ПоСлою", "l"], ["Масштаб типа линий", "1"], ["Вес линий", "ПоСлою", "l"], ["Прозрачность", "ПоСлою"], ["Толщина", "0"]])}
        ${this.group("3D-визуализация", [["Материал", "ПоСлою"]])}
        ${this.group("Стиль печати", [["Стиль печати", "ПоЦвету", "m"], ["Таблица стилей печати", "Нет"], ["Пространство  таблиц...", "Модель", "m"], ["Тип стилей печати", "Недоступно", "m"]])}
        ${this.group("Вид", [])}
      </div></div>`;
  }
}

@customElement("cad-canvas")
export class CadCanvas extends LitElement {
  static styles = [base, css`
    :host { display: block; position: relative; flex: 1; min-width: 0; overflow: hidden; background: #c0c0c0; }
    .draw { position: absolute; inset: 0; width: 100%; height: 100%; }
    .big { font: 300 65px "Open Sans", sans-serif; }
    .tag { font: 12px "Liberation Mono", monospace; }
    .axis { font: 300 14px "Open Sans", sans-serif; }
    .mini { position: absolute; left: 0; top: 284px; width: 13px; height: 16px; background: #dcdcdc; }
    .water { position: absolute; left: 701px; bottom: -6px; color: #acacac; font-size: 10px; line-height: 16px; white-space: nowrap; }
    .water b { display: block; font-weight: 400; font-size: 13px; }
    .cmd { position: absolute; left: 434px; bottom: 0; width: 177px; font: 10px "DejaVu Sans Mono", monospace; }
    .hist { display: flex; flex-direction: column; align-items: flex-start; gap: 4px; margin: 0 0 2px 40px; }
    .hist span { background: #6d6d6d; color: #f2f2f2; border-radius: 1px; line-height: 12px; height: 12px; padding: 0 1px; white-space: pre; }
    .line { display: flex; height: 17px; background: #fff; border: 1px solid #9a9a9a; align-items: center; gap: 3px; padding-right: 4px; }
    .dark { display: flex; align-items: center; gap: 4px; align-self: stretch; width: 35px; background: linear-gradient(#6a6a6a, #3a3a3a); padding-left: 2px; }
    .dark i { width: 4px; height: 11px; background: repeating-linear-gradient(#aaa 0 1px, transparent 1px 2px); }
    .line input { flex: 1; min-width: 0; border: 0; padding: 0; font-style: italic; background: none; height: 14px; }
    .line input::placeholder { color: #8c8c8c; opacity: 1; }
  `];
  render() {
    return html`
      <svg class="draw"><g transform="translate(-227 -122)">
        <g stroke="#1414dc" fill="#1414dc"><path d="M473 241L551 319M237 479L314 556M476 245L365 356M352 369L240 481" fill="none"/><path d="M477 244l-4 9-5-5zM239 482l9-4-5-5z" stroke="none"/></g>
        <path d="M551 319.500H887M551 319L350 521" stroke="#444" fill="none"/>
        <path d="M316 554L344 514.500 356 526.500z" fill="#000"/>
        <path d="M314.500 522v44M303 555.500h45" stroke="#222" fill="none"/>
        <text class="big" x="638" y="302" stroke="#000" stroke-width="3" stroke-linejoin="round">ВЕРХ</text>
        <text class="tag" x="312" y="366" fill="#7676cc">Длина выноски</text>
        <text class="axis" x="315" y="520" fill="#222">Y</text><text class="axis" x="350" y="555" fill="#222">X</text>
        <path d="M546 314h11v10h-11z" fill="#7cc8f2" stroke="#1d4a78"/><path d="M548 319h7M551.500 316v6" stroke="#246"/>
        <path d="M309.500 550.500h10v11h-10z" fill="#5d9fd8" stroke="#133a66"/><circle cx="314.500" cy="556" r="4" fill="none" stroke="#123"/><path d="M311 553h7v6h-7zM314.500 550v12M309 556h11" fill="none" stroke="#135"/>
        <path d="M718.500 487v30M718.500 522v30M687 519.500h29M721 519.500h30M716.500 517.500h4v4h-4z" stroke="#f4f4f4" fill="none"/>
      </g></svg>
      <div class="mini">${icon("floatp", 13)}</div>
      <div class="water"><b>Активация Windows</b>Чтобы активировать Windows, перейдите в раздел "Параметры".</div>
      <div class="cmd">
        <div class="hist"><span>Команда: _ATTDEF</span><span>Начальная точка:</span></div>
        <div class="line"><div class="dark"><i></i><svg class="ic" width="8" height="8" viewBox="0 0 8 8"><path d="M1 1l6 6M7 1L1 7" stroke="#eee" stroke-width="1.500"/></svg>${icon("wrench", 11)}</div>
          ${icon("prompt", 11)}<svg class="ic" width="5" height="4" viewBox="0 0 6 4"><path d="M0 0h6L3 4z" fill="#777"/></svg>
          <input aria-label="Командная строка" placeholder="Введите команду" />
          <svg class="ic" width="5" height="4" viewBox="0 0 6 4"><path d="M0 4h6L3 0z" fill="#000"/></svg></div>
      </div>`;
  }
}

@customElement("cad-tools")
export class CadTools extends LitElement {
  static styles = [base, css`
    :host { display: grid; grid-template-columns: 12px 99px 15px; width: 128px; height: 399px; color: #f0f0f0; }
    .tabs { display: flex; flex-direction: column; }
    .tabs button { writing-mode: vertical-rl; transform: rotate(180deg); height: 81px; width: 13px; line-height: 12px; background: #505050; border: 1px solid #333; color: #a8a8a8; }
    .tabs .on { background: #5a5a5a; color: #fff; border-left: 0; }
    .list { display: flex; flex-direction: column; background: #5a5a5a; border: solid #303030; border-width: 3px 0 3px 1px; padding: 2px 4px 0 7px; overflow: hidden; position: relative; }
    .list button { display: grid; grid-template-columns: 28px 1fr; align-items: center; gap: 3px; height: 34px; flex: none; text-align: left; line-height: 10px; }
    .lbl { white-space: pre; }
    .thumb { position: absolute; right: 3px; top: 3px; width: 3px; height: 174px; background: #424242; }
    .side { display: flex; flex-direction: column; align-items: center; gap: 6px; background: #4d4d4d; border: 1px solid #303030; border-top-width: 3px; padding: 0 0 1px; }
    .title { writing-mode: vertical-rl; transform: rotate(180deg); margin-top: auto; color: #b0b0b0; line-height: 12px; }
  `];
  @property() caption = "ПАЛИТРЫ ИНСТРУМЕНТОВ - ЧЕРЧЕНИЕ";
  render() {
    const rows = [["tLine", "Отрезок"], ["tRay", "Прямая"], ["tPoly", "Полилиния"], ["tPent", "Многоуголь\nник"], ["tRect", "Прямоуголь\nник"], ["tArc", "Дуга"], ["tCircle", "Круг"], ["tCloud", "Облако"], ["tSpline", "Сплайн"], ["tEll", "Эллипс"], ["tEarc", "Эллиптичес\nкая дуга"], ["tIns", "Вставить"]];
    return html`
      <div class="tabs"><button class="on">Чертить</button><button>Команды</button></div>
      <div class="list">${rows.map(([n, t]) => html`<button>${icon(n, 28)}<span class="lbl">${t}</span></button>`)}<i class="thumb"></i></div>
      <div class="side">
        ${["M1 1l5 5M6 1L1 6", "M1 0v7M6 1L3 3.500 6 6M3 3.500h4", "M3.500 0v7M0 3.500h7M1 1l5 5M6 1L1 6"].map((d) => html`<button aria-label="Управление палитрой"><svg class="ic" width="7" height="7" viewBox="0 0 7 7"><path d=${d} stroke="#ddd" fill="none"/></svg></button>`)}
        <span class="title">${this.caption}</span>
        <svg class="ic" width="9" height="9" viewBox="0 0 9 9"><path d="M1 1h7v7H1zM1 3.500h7M1 6h7M4 3v5" stroke="#bbb" fill="none"/></svg>
      </div>`;
  }
}

@customElement("cad-status")
export class CadStatus extends LitElement {
  static styles = [base, css`
    :host { display: flex; justify-content: flex-end; height: 19px; padding: 1px 2px 1px 0; background: #373737; color: #eee; }
    .strip { display: flex; background: #4c4c4c; border: 1px solid #5a5a5a; }
    button { display: grid; place-items: center; width: 16px; }
    .model { width: 43px; border-right: 1px solid #6a6a6a; }
    .on { background: #4f86c4; }
    .d { width: 10px; }
    .g { width: 17px; border-left: 1px solid #666; }
    .num { color: #aaa; }
  `];
  render() {
    const s = "sGrid sSnap - *sDyn |sOrtho *sPolar - sIso - |sAngle *sOsnap - *sLwt *|sTrans sCube - *|sUcs *|sAnno *sAnno2 sAnno3 1:1 - sGear - |sPlus *|sQp |sIsol sHw |sClean sMenu".split(" ");
    return html`<div class="strip"><button class="model">МОДЕЛЬ</button>${s.map((t) => {
      const n = t.replace(/[*|]/g, "");
      return html`<button aria-label=${n} class=${classMap({ on: t.includes("*"), g: t.includes("|"), d: n === "-", num: n === "1:1" })}>${n === "-" ? caret() : n === "1:1" ? n : icon(n, 14)}</button>`;
    })}</div>`;
  }
}

@customElement("win-taskbar")
export class WinTaskbar extends LitElement {
  static styles = [base, css`
    :host { display: flex; height: 27px; background: #060913; color: #e8e8e8; }
    .start { width: 32px; display: grid; place-items: center; }
    .find { display: flex; align-items: center; gap: 7px; width: 230px; background: #f2f2f2; padding-left: 6px; }
    .find input { border: 0; background: none; font-size: 10px; padding: 0; flex: 1; min-width: 0; }
    .find input::placeholder { color: #3c3c3c; opacity: 1; }
    .apps { display: flex; }
    .apps button { width: 33px; display: grid; place-items: center; border-bottom: 2px solid transparent; }
    .apps .run { border-color: #76b9ed; }
    .apps .cur { background: #3a3d48; }
    .tray { margin-left: auto; display: flex; align-items: center; }
    .tray .ic { margin-right: 2px; }
    .ppl { margin-right: 10px; }
    .lang { margin: 0 3px 0 5px; }
    .clock { text-align: center; line-height: 12px; width: 44px; margin-right: 7px; }
    .bell { position: relative; width: 30px; }
    .bell span { position: absolute; left: 11px; top: 8px; width: 11px; height: 11px; border-radius: 50%; background: #444; line-height: 11px; text-align: center; }
  `];
  render() {
    const apps = ["task", "folder", "mail", "adsk", "chrome", "acad", "camG", "camR"];
    return html`
      <button class="start" aria-label="Пуск">${icon("win", 14)}</button>
      <label class="find">${icon("search", 14)}<input aria-label="Поиск" placeholder="Введите здесь текст для поиска" /></label>
      <div class="apps">${apps.map((n, i) => html`<button aria-label=${n} class=${classMap({ run: i > 3, cur: i === 5 })}>${icon(n, i ? 20 : 14)}</button>`)}</div>
      <div class="tray"><span class="ppl">${icon("ppl", 14)}</span>${["chev", "yel", "vol", "net"].map((n) => icon(n, 14))}
        <span class="lang">РУС</span><div class="clock">15:00<br />10.02.2020</div>
        <div class="bell">${icon("note", 18)}<span>4</span></div></div>`;
  }
}

@customElement("app-root")
export class AppRoot extends LitElement {
  static styles = [base, css`
    :host { display: flex; flex-direction: column; height: 100vh; min-height: 600px; position: relative; overflow: hidden; padding-top: 1px; background: linear-gradient(#0a0d12, #1d2735 15%, #1d2735 60%, #0c1018); font: 8px Roboto, "Noto Sans", sans-serif; }
    .window { flex: 1; min-height: 0; display: flex; flex-direction: column; margin: 0 7px 5px 5px; border: solid #c8c8c8; border-width: 0 1px 1px 1px; position: relative; background: #373737; }
    .logo { position: absolute; left: 0; top: 6px; width: 27px; height: 26px; background: linear-gradient(#8a8a8a, #585858); border: 1px solid #999; display: flex; align-items: center; }
    .files { display: flex; height: 14px; padding: 0 0 0 14px; margin: 2px 0 1px; color: #a8a8a8; line-height: 14px; }
    .files button { width: 88px; display: flex; align-items: center; justify-content: space-between; padding: 0 12px 0 7px; background: #505050; clip-path: polygon(0 100%, 6px 0, 92% 0, 100% 100%); }
    .files .on { background: linear-gradient(#7a7a7a, #5a5a5a); color: #fff; margin-left: -6px; }
    .files .add { width: 20px; padding: 0 7px; margin-left: -4px; color: #ddd; font-size: 12px; }
    .edge { height: 2px; background: #6a6a6a; }
    .main { flex: 1; min-height: 0; display: flex; }
    .sheets { display: flex; height: 13px; padding-left: 6px; color: #b0b0b0; line-height: 13px; }
    .sheets button { padding: 0 8px; background: #505050; clip-path: polygon(0 0, 100% 0, calc(100% - 6px) 100%, 6px 100%); margin-right: -1px; }
    .sheets .on { background: #777; color: #fff; font-weight: 700; }
    .tools { position: absolute; right: 0; top: 118px; }
    .green { position: absolute; right: 2px; top: 23px; width: 5px; height: 17px; background: #8fae2b; }
  `];
  render() {
    return html`
      <i class="green"></i>
      <div class="window">
        <cad-titlebar></cad-titlebar>
        <cad-ribbon></cad-ribbon>
        <button class="logo" aria-label="Меню приложения"><svg class="ic" width="19" height="20" viewBox="0 0 19 20"><path d="M0 19L7 1h5l6 18h-5l-1.500-5H8l-3 5zM8 10h3L9.700 5z" fill="#b01c26"/><path d="M7 1h4L5 19H0z" fill="#e23a42"/></svg>${caret()}</button>
        <div class="files"><button>Начало</button><button class="on">Деталь*<span>×</span></button><button class="add" aria-label="Новый чертеж">+</button></div>
        <div class="edge"></div>
        <div class="main"><cad-palettes></cad-palettes><cad-canvas></cad-canvas></div>
        <div class="sheets">${["Модель", "Лист1", "Лист2", "лист 3", "А3 (СПДС)", "+"].map((t, i) => html`<button class=${i ? "" : "on"}>${t}</button>`)}</div>
        <cad-status></cad-status>
      </div>
      <cad-tools class="tools"></cad-tools>
      <win-taskbar></win-taskbar>`;
  }
}
